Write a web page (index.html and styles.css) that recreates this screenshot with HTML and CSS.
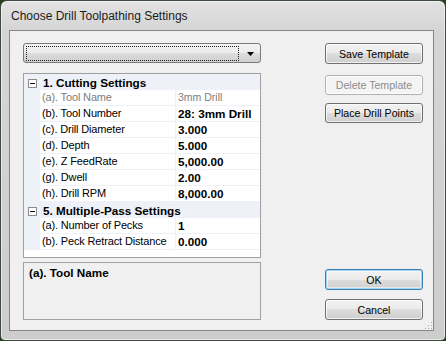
FILE: index.html
```html
<!DOCTYPE html>
<html lang="en">
<head>
    <meta charset="UTF-8">
    <title>Choose Drill Toolpathing Settings</title>
    <link rel="stylesheet" href="styles.css">
</head>
<body>
    <div class="window">
        <div class="titlebar">Choose Drill Toolpathing Settings</div>
        <div class="client">
            <div class="left-col">
                <div class="combo">
                    <span class="combo-focus"></span>
                    <span class="combo-arrow">
                        <svg width="7" height="4" viewBox="0 0 7 4"><polygon points="0,0 7,0 3.5,4" fill="#000"/></svg>
                    </span>
                </div>

                <div class="grid">
                    <div class="row category">
                        <span class="margin"><span class="toggle"></span></span>
                        <span class="cat-name">1. Cutting Settings</span>
                    </div>
                    <div class="row readonly">
                        <span class="margin"></span>
                        <span class="label">(a). Tool Name</span>
                        <span class="value">3mm Drill</span>
                    </div>
                    <div class="row">
                        <span class="margin"></span>
                        <span class="label">(b). Tool Number</span>
                        <span class="value">28: 3mm Drill</span>
                    </div>
                    <div class="row">
                        <span class="margin"></span>
                        <span class="label">(c). Drill Diameter</span>
                        <span class="value">3.000</span>
                    </div>
                    <div class="row">
                        <span class="margin"></span>
                        <span class="label">(d). Depth</span>
                        <span class="value">5.000</span>
                    </div>
                    <div class="row">
                        <span class="margin"></span>
                        <span class="label">(e). Z FeedRate</span>
                        <span class="value">5,000.00</span>
                    </div>
                    <div class="row">
                        <span class="margin"></span>
                        <span class="label">(g). Dwell</span>
                        <span class="value">2.00</span>
                    </div>
                    <div class="row">
                        <span class="margin"></span>
                        <span class="label">(h). Drill RPM</span>
                        <span class="value">8,000.00</span>
                    </div>
                    <div class="row category">
                        <span class="margin"><span class="toggle"></span></span>
                        <span class="cat-name">5. Multiple-Pass Settings</span>
                    </div>
                    <div class="row">
                        <span class="margin"></span>
                        <span class="label">(a). Number of Pecks</span>
                        <span class="value">1</span>
                    </div>
                    <div class="row">
                        <span class="margin"></span>
                        <span class="label">(b). Peck Retract Distance</span>
                        <span class="value">0.000</span>
                    </div>
                </div>

                <div class="desc">(a). Tool Name</div>
            </div>

            <div class="right-col">
                <button class="btn btn-save">Save Template</button>
                <button class="btn btn-delete" disabled>Delete Template</button>
                <button class="btn btn-place">Place Drill Points</button>
                <button class="btn btn-ok">OK</button>
                <button class="btn btn-cancel">Cancel</button>
            </div>
        </div>
        <svg class="grip" width="9" height="9" viewBox="0 0 9 9">
            <rect x="7" y="1" width="1" height="1" fill="#a8a8a8"/>
            <rect x="4" y="4" width="1" height="1" fill="#a8a8a8"/>
            <rect x="7" y="4" width="1" height="1" fill="#a8a8a8"/>
            <rect x="1" y="7" width="1" height="1" fill="#a8a8a8"/>
            <rect x="4" y="7" width="1" height="1" fill="#a8a8a8"/>
            <rect x="7" y="7" width="1" height="1" fill="#a8a8a8"/>
        </svg>
    </div>
</body>
</html>
```

FILE: styles.css
```css
body {
    margin: 0;
    width: 446px;
    height: 341px;
    background-color: #27401f;
    font-family: 'Liberation Sans', Arial, sans-serif;
    overflow: hidden;
}

.window {
    position: relative;
    box-sizing: border-box;
    width: 446px;
    height: 341px;
    border: 1px solid #3e4a3e;
    border-radius: 7px 7px 5px 5px;
    background: linear-gradient(#e2e2e2, #d5d5d5 29px, #cdcdcd);
    box-shadow: inset 0 0 0 1px rgba(255,255,255,0.55);
    padding: 0 11px 9px 8px;
    display: flex;
    flex-direction: column;
}

.titlebar {
    height: 29px;
    line-height: 31px;
    font-size: 12px;
    color: #1b1b1b;
    padding-left: 2px;
}

.client {
    flex: 1;
    display: flex;
    justify-content: space-between;
    background-color: #f0f0f0;
    border: 1px solid #858585;
    padding: 12px 10px 10px 13px;
}

.left-col {
    width: 238px;
    display: flex;
    flex-direction: column;
}

.combo {
    box-sizing: border-box;
    height: 20px;
    display: flex;
    padding: 2px 0 1px 2px;
    border: 1px solid #7a7a7a;
    border-radius: 3px;
    background: linear-gradient(#f3f3f3, #ebebeb 50%, #dddddd 50%, #cfcfcf);
}

.combo-focus {
    flex: 1;
    border: 1px dotted #222;
}

.combo-arrow {
    width: 20px;
    display: flex;
    justify-content: center;
    align-items: center;
    padding-left: 1px;
}

.grid {
    box-sizing: border-box;
    height: 185px;
    margin-top: 10px;
    border: 1px solid #a0a0a0;
    background-color: #fff;
}

.row {
    display: flex;
    height: 16px;
    line-height: 15px;
    font-size: 11px;
    color: #000;
}

.margin {
    width: 16px;
    flex-shrink: 0;
    background-color: #eef2f8;
    display: flex;
    justify-content: center;
    align-items: center;
}

.label {
    width: 133px;
    flex-shrink: 0;
    padding-left: 2px;
    border-bottom: 1px solid #eef2f8;
    border-right: 1px solid #eef2f8;
    white-space: nowrap;
    letter-spacing: -0.15px;
}

.value {
    flex: 1;
    padding-left: 2px;
    border-bottom: 1px solid #eef2f8;
    font-weight: bold;
    font-size: 11.7px;
    white-space: nowrap;
}

.readonly .label,
.readonly .value {
    color: #7d7d7d;
}

.readonly .value {
    font-weight: normal;
    font-size: 10.5px;
}

.category {
    background-color: #eef2f8;
}

.cat-name {
    padding-left: 3px;
    font-weight: bold;
    font-size: 11.7px;
    line-height: 17px;
}

.toggle {
    box-sizing: border-box;
    width: 9px;
    height: 9px;
    margin-top: 2px;
    border: 1px solid #8c8c8c;
    background-color: #fff;
    display: flex;
    justify-content: center;
    align-items: center;
}

.toggle::after {
    content: "";
    width: 5px;
    height: 1px;
    background-color: #000;
}

.desc {
    box-sizing: border-box;
    height: 58px;
    margin-top: 4px;
    border: 1px solid #a0a0a0;
    padding: 3px 5px;
    font-size: 11.7px;
    font-weight: bold;
    line-height: 14px;
}

.right-col {
    width: 98px;
    display: flex;
    flex-direction: column;
}

.btn {
    box-sizing: border-box;
    height: 21px;
    padding: 0;
    border: 1px solid #707070;
    border-radius: 3px;
    background: linear-gradient(#f2f2f2, #ebebeb 50%, #dddddd 50%, #cfcfcf);
    font-family: 'Liberation Sans', Arial, sans-serif;
    font-size: 10.6px;
    color: #000;
    box-shadow: inset 0 0 0 1px rgba(255,255,255,0.7);
}

.btn-delete {
    height: 20px;
    margin-top: 11px;
    border-color: #adb2b5;
    background: #f4f4f4;
    color: #8d8d8d;
}

.btn-place {
    height: 20px;
    margin-top: 8px;
}

.btn-ok {
    margin-top: auto;
    border-color: #3c7fb1;
    box-shadow: inset 0 0 0 1px #9fd5f5, inset 0 0 0 2px rgba(255,255,255,0.5);
}

.btn-cancel {
    margin-top: 9px;
}

.grip {
    position: absolute;
    right: 12px;
    bottom: 10px;
}
```
